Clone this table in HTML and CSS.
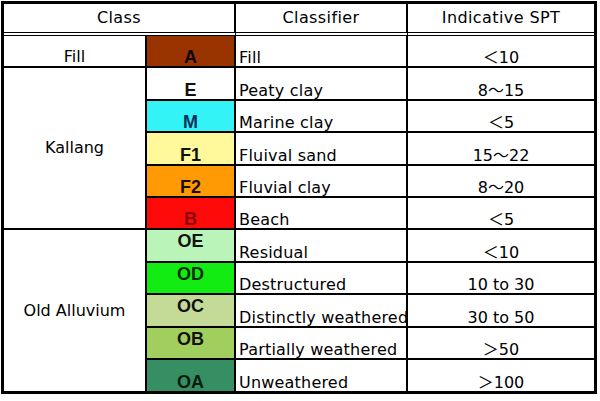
FILE: index.html
```html
<!DOCTYPE html>
<html lang="en">
<head>
<meta charset="utf-8">
<title>Soil classification</title>
<link rel="stylesheet" href="styles.css">
</head>
<body>
<div class="sheet">
  <div class="cell head span2">Class</div>
  <div class="cell head">Classifier</div>
  <div class="cell head last">Indicative SPT</div>

  <div class="cell group bottom">Fill</div>
  <div class="cell code c-a">A</div>
  <div class="cell name">Fill</div>
  <div class="cell spt last">＜10</div>

  <div class="cell group span5">Kallang</div>
  <div class="cell code c-e">E</div>
  <div class="cell name">Peaty clay</div>
  <div class="cell spt last">8～15</div>

  <div class="cell code c-m">M</div>
  <div class="cell name">Marine clay</div>
  <div class="cell spt last">＜5</div>

  <div class="cell code c-f1">F1</div>
  <div class="cell name">Fluival sand</div>
  <div class="cell spt last">15～22</div>

  <div class="cell code c-f2">F2</div>
  <div class="cell name">Fluvial clay</div>
  <div class="cell spt last">8～20</div>

  <div class="cell code c-b">B</div>
  <div class="cell name">Beach</div>
  <div class="cell spt last">＜5</div>

  <div class="cell group span5 end">Old Alluvium</div>
  <div class="cell code top c-oe">OE</div>
  <div class="cell name">Residual</div>
  <div class="cell spt last">＜10</div>

  <div class="cell code top c-od">OD</div>
  <div class="cell name">Destructured</div>
  <div class="cell spt last">10 to 30</div>

  <div class="cell code top c-oc">OC</div>
  <div class="cell name">Distinctly weathered</div>
  <div class="cell spt last">30 to 50</div>

  <div class="cell code top c-ob">OB</div>
  <div class="cell name">Partially weathered</div>
  <div class="cell spt last">＞50</div>

  <div class="cell code c-oa end">OA</div>
  <div class="cell name end">Unweathered</div>
  <div class="cell spt last end">＞100</div>
</div>
</body>
</html>
```
FILE: styles.css
```css
html, body {
  margin: 0;
  padding: 0;
  background: #ffffff;
}

body {
  font-family: "DejaVu Sans", "Noto Sans CJK JP", sans-serif;
  font-size: 16px;
  color: #000000;
}

.sheet {
  display: grid;
  grid-template-columns: 143px 89px 172px 186px;
  grid-template-rows: 32px 32px 33px 32px 33px 32px 32px 33px 32px 33px 32px 31px;
  width: 596px;
  box-sizing: border-box;
  border: 3px solid #000;
  margin: 1px 0 0 1px;
}

.cell {
  box-sizing: border-box;
  display: flex;
  border-right: 2px solid #000;
  border-bottom: 2px solid #000;
  line-height: 17px;
  white-space: nowrap;
  overflow: hidden;
  min-width: 0;
}

.cell.last {
  border-right: none;
}

.cell.end {
  border-bottom: none;
}

.head {
  justify-content: center;
  align-items: center;
  line-height: 18px;
  letter-spacing: 0.4px;
  border-bottom: 4px double #000;
}

.span2 {
  grid-column: span 2;
}

.span5 {
  grid-row: span 5;
}

.group {
  justify-content: center;
  align-items: center;
  line-height: 18px;
}

.group.bottom {
  align-items: flex-end;
}

.code {
  justify-content: center;
  align-items: flex-end;
  font-family: "Liberation Sans", "DejaVu Sans", sans-serif;
  font-weight: bold;
  font-size: 18px;
  line-height: 18px;
}

.code.top {
  align-items: flex-start;
  padding-top: 2px;
}

.name {
  align-items: flex-end;
  padding-left: 3px;
  letter-spacing: 0.2px;
}

.spt {
  justify-content: center;
  align-items: flex-end;
}

.c-a  { background: #993300; color: #110500; }
.c-e  { background: #ffffff; color: #111111; }
.c-m  { background: #33f3f6; color: #06305c; }
.c-f1 { background: #fff99c; color: #111111; }
.c-f2 { background: #ff9a05; color: #1a0d00; }
.c-b  { background: #ff0a0a; color: #8a0808; }
.c-oe { background: #bbf4b8; color: #111111; }
.c-od { background: #12ec12; color: #0a2a0a; }
.c-oc { background: #c4db98; color: #111111; }
.c-ob { background: #a1cf5e; color: #111111; }
.c-oa { background: #368f62; color: #0a1a10; }
```
